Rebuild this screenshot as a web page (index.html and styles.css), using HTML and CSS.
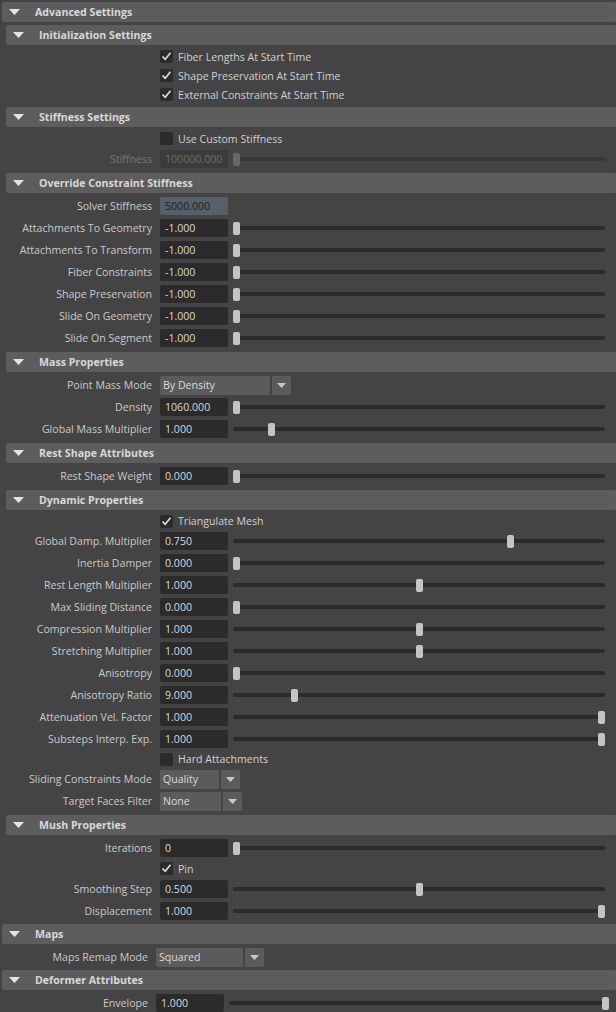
FILE: index.html
```html
<!DOCTYPE html>
<html>
<head>
<meta charset="utf-8">
<link rel="stylesheet" href="styles.css">
</head>
<body>
<div class="editor">

  <section class="frame top">
    <div class="hdr"><svg class="tri" viewBox="0 0 11 6"><polygon points="0,0 11,0 5.5,6"/></svg><span>Advanced Settings</span></div>
    <div class="nest">

      <section class="frame sub">
        <div class="hdr"><svg class="tri" viewBox="0 0 11 6"><polygon points="0,0 11,0 5.5,6"/></svg><span>Initialization Settings</span></div>
        <div class="body">
          <div class="row chk"><span class="lbl"></span><span class="cb on"><svg viewBox="0 0 13 13"><polyline points="2.5,6.5 5.2,9.3 10.5,2.8"/></svg></span><span class="cbt">Fiber Lengths At Start Time</span></div>
          <div class="row chk"><span class="lbl"></span><span class="cb on"><svg viewBox="0 0 13 13"><polyline points="2.5,6.5 5.2,9.3 10.5,2.8"/></svg></span><span class="cbt">Shape Preservation At Start Time</span></div>
          <div class="row chk"><span class="lbl"></span><span class="cb on"><svg viewBox="0 0 13 13"><polyline points="2.5,6.5 5.2,9.3 10.5,2.8"/></svg></span><span class="cbt">External Constraints At Start Time</span></div>
        </div>
      </section>

      <section class="frame sub">
        <div class="hdr"><svg class="tri" viewBox="0 0 11 6"><polygon points="0,0 11,0 5.5,6"/></svg><span>Stiffness Settings</span></div>
        <div class="body">
          <div class="row chk"><span class="lbl"></span><span class="cb"></span><span class="cbt">Use Custom Stiffness</span></div>
          <div class="row disabled"><span class="lbl">Stiffness</span><span class="field">100000.000</span><span class="slider" style="--v:0"><span class="thumb"></span></span></div>
        </div>
      </section>

      <section class="frame sub">
        <div class="hdr"><svg class="tri" viewBox="0 0 11 6"><polygon points="0,0 11,0 5.5,6"/></svg><span>Override Constraint Stiffness</span></div>
        <div class="body">
          <div class="row"><span class="lbl">Solver Stiffness</span><span class="field sel">5000.000</span></div>
          <div class="row"><span class="lbl">Attachments To Geometry</span><span class="field">-1.000</span><span class="slider" style="--v:0"><span class="thumb"></span></span></div>
          <div class="row"><span class="lbl">Attachments To Transform</span><span class="field">-1.000</span><span class="slider" style="--v:0"><span class="thumb"></span></span></div>
          <div class="row"><span class="lbl">Fiber Constraints</span><span class="field">-1.000</span><span class="slider" style="--v:0"><span class="thumb"></span></span></div>
          <div class="row"><span class="lbl">Shape Preservation</span><span class="field">-1.000</span><span class="slider" style="--v:0"><span class="thumb"></span></span></div>
          <div class="row"><span class="lbl">Slide On Geometry</span><span class="field">-1.000</span><span class="slider" style="--v:0"><span class="thumb"></span></span></div>
          <div class="row"><span class="lbl">Slide On Segment</span><span class="field">-1.000</span><span class="slider" style="--v:0"><span class="thumb"></span></span></div>
        </div>
      </section>

      <section class="frame sub">
        <div class="hdr"><svg class="tri" viewBox="0 0 11 6"><polygon points="0,0 11,0 5.5,6"/></svg><span>Mass Properties</span></div>
        <div class="body">
          <div class="row"><span class="lbl">Point Mass Mode</span><span class="dd w110"><span class="ddv">By Density</span></span><span class="ddb"><svg viewBox="0 0 9 5"><polygon points="0,0 9,0 4.5,5"/></svg></span></div>
          <div class="row"><span class="lbl">Density</span><span class="field">1060.000</span><span class="slider" style="--v:0"><span class="thumb"></span></span></div>
          <div class="row"><span class="lbl">Global Mass Multiplier</span><span class="field">1.000</span><span class="slider" style="--v:0.096"><span class="thumb"></span></span></div>
        </div>
      </section>

      <section class="frame sub">
        <div class="hdr"><svg class="tri" viewBox="0 0 11 6"><polygon points="0,0 11,0 5.5,6"/></svg><span>Rest Shape Attributes</span></div>
        <div class="body">
          <div class="row"><span class="lbl">Rest Shape Weight</span><span class="field">0.000</span><span class="slider" style="--v:0"><span class="thumb"></span></span></div>
        </div>
      </section>

      <section class="frame sub">
        <div class="hdr"><svg class="tri" viewBox="0 0 11 6"><polygon points="0,0 11,0 5.5,6"/></svg><span>Dynamic Properties</span></div>
        <div class="body">
          <div class="row chk tight"><span class="lbl"></span><span class="cb on"><svg viewBox="0 0 13 13"><polyline points="2.5,6.5 5.2,9.3 10.5,2.8"/></svg></span><span class="cbt">Triangulate Mesh</span></div>
          <div class="row"><span class="lbl">Global Damp. Multiplier</span><span class="field">0.750</span><span class="slider" style="--v:0.75"><span class="thumb"></span></span></div>
          <div class="row"><span class="lbl">Inertia Damper</span><span class="field">0.000</span><span class="slider" style="--v:0"><span class="thumb"></span></span></div>
          <div class="row"><span class="lbl">Rest Length Multiplier</span><span class="field">1.000</span><span class="slider" style="--v:0.5"><span class="thumb"></span></span></div>
          <div class="row"><span class="lbl">Max Sliding Distance</span><span class="field">0.000</span><span class="slider" style="--v:0"><span class="thumb"></span></span></div>
          <div class="row"><span class="lbl">Compression Multiplier</span><span class="field">1.000</span><span class="slider" style="--v:0.5"><span class="thumb"></span></span></div>
          <div class="row"><span class="lbl">Stretching Multiplier</span><span class="field">1.000</span><span class="slider" style="--v:0.5"><span class="thumb"></span></span></div>
          <div class="row"><span class="lbl">Anisotropy</span><span class="field">0.000</span><span class="slider" style="--v:0"><span class="thumb"></span></span></div>
          <div class="row"><span class="lbl">Anisotropy Ratio</span><span class="field">9.000</span><span class="slider" style="--v:0.16"><span class="thumb"></span></span></div>
          <div class="row"><span class="lbl">Attenuation Vel. Factor</span><span class="field">1.000</span><span class="slider" style="--v:1"><span class="thumb"></span></span></div>
          <div class="row"><span class="lbl">Substeps Interp. Exp.</span><span class="field">1.000</span><span class="slider" style="--v:1"><span class="thumb"></span></span></div>
          <div class="row chk tight"><span class="lbl"></span><span class="cb"></span><span class="cbt">Hard Attachments</span></div>
          <div class="row"><span class="lbl">Sliding Constraints Mode</span><span class="dd w59"><span class="ddv">Quality</span></span><span class="ddb"><svg viewBox="0 0 9 5"><polygon points="0,0 9,0 4.5,5"/></svg></span></div>
          <div class="row"><span class="lbl">Target Faces Filter</span><span class="dd w61"><span class="ddv">None</span></span><span class="ddb"><svg viewBox="0 0 9 5"><polygon points="0,0 9,0 4.5,5"/></svg></span></div>
        </div>
      </section>

      <section class="frame sub">
        <div class="hdr"><svg class="tri" viewBox="0 0 11 6"><polygon points="0,0 11,0 5.5,6"/></svg><span>Mush Properties</span></div>
        <div class="body">
          <div class="row"><span class="lbl">Iterations</span><span class="field">0</span><span class="slider" style="--v:0"><span class="thumb"></span></span></div>
          <div class="row chk"><span class="lbl"></span><span class="cb on"><svg viewBox="0 0 13 13"><polyline points="2.5,6.5 5.2,9.3 10.5,2.8"/></svg></span><span class="cbt">Pin</span></div>
          <div class="row"><span class="lbl">Smoothing Step</span><span class="field">0.500</span><span class="slider" style="--v:0.5"><span class="thumb"></span></span></div>
          <div class="row"><span class="lbl">Displacement</span><span class="field">1.000</span><span class="slider" style="--v:1"><span class="thumb"></span></span></div>
        </div>
      </section>

    </div>
  </section>

  <section class="frame top">
    <div class="hdr"><svg class="tri" viewBox="0 0 11 6"><polygon points="0,0 11,0 5.5,6"/></svg><span>Maps</span></div>
    <div class="body">
      <div class="row"><span class="lbl">Maps Remap Mode</span><span class="dd w87"><span class="ddv">Squared</span></span><span class="ddb"><svg viewBox="0 0 9 5"><polygon points="0,0 9,0 4.5,5"/></svg></span></div>
    </div>
  </section>

  <section class="frame top">
    <div class="hdr"><svg class="tri" viewBox="0 0 11 6"><polygon points="0,0 11,0 5.5,6"/></svg><span>Deformer Attributes</span></div>
    <div class="body">
      <div class="row"><span class="lbl">Envelope</span><span class="field">1.000</span><span class="slider" style="--v:1"><span class="thumb"></span></span></div>
    </div>
  </section>

</div>
</body>
</html>
```

FILE: styles.css
```css
* { box-sizing: border-box; }
html, body { margin: 0; padding: 0; }
body {
  background: #444444;
  width: 616px;
  height: 1012px;
  overflow: hidden;
  font-family: "Open Sans", "Noto Sans", sans-serif;
  font-size: 10.6px;
  color: #cacaca;
}
.editor {
  padding-top: 2px;
  display: flex;
  flex-direction: column;
  gap: 2px;
}
.frame.top { margin-left: 2px; }
.hdr {
  height: 20px;
  background: #5d5d5d;
  border-radius: 2px;
  display: flex;
  align-items: center;
  font-weight: bold;
  color: #d8d8d8;
  white-space: nowrap;
}
.tri {
  width: 11px;
  height: 6px;
  margin-left: 7px;
  margin-right: 15px;
  flex: none;
  fill: #e4e4e4;
}
.nest {
  padding-top: 3px;
  padding-left: 4px;
  display: flex;
  flex-direction: column;
  gap: 3px;
}
.body { padding-top: 2px; }
.row {
  display: flex;
  align-items: center;
  height: 22px;
  white-space: nowrap;
}
.row.chk { height: 19px; }
.row.chk.tight { height: 18px; }
.lbl {
  flex: none;
  width: 154px;
  padding-right: 8px;
  text-align: right;
}
.field {
  flex: none;
  width: 68px;
  height: 18px;
  line-height: 18px;
  padding-left: 5px;
  background: #2b2b2b;
  border-radius: 2px;
  color: #dadada;
}
.field.sel {
  background: #56606b;
  color: #1c1c1c;
}
.slider {
  flex: 1;
  position: relative;
  height: 13px;
  margin-left: 5px;
  margin-right: 11px;
}
.top > .body .slider { margin-right: 7px; }
.slider::before {
  content: "";
  position: absolute;
  left: 0;
  right: 0;
  top: 4px;
  height: 4px;
  border-radius: 2px;
  background: #2b2b2b;
}
.thumb {
  position: absolute;
  top: 0;
  left: calc(var(--v) * (100% - 7px));
  width: 7px;
  height: 13px;
  border-radius: 2px;
  background: #c4c4c4;
}
.disabled .lbl { color: #767676; }
.disabled .field { background: #3b3b3b; color: #6c6c6c; }
.disabled .slider::before { background: #383838; }
.disabled .thumb { background: #676767; }
.cb {
  flex: none;
  width: 13px;
  height: 13px;
  background: #2b2b2b;
  border-radius: 2px;
  display: flex;
}
.cb svg {
  width: 13px;
  height: 13px;
  fill: none;
  stroke: #e0e0e0;
  stroke-width: 1.6;
}
.cbt {
  margin-left: 5px;
  color: #d0d0d0;
}
.dd {
  flex: none;
  height: 19px;
  line-height: 19px;
  background: #5b5b5b;
  border-radius: 2px 0 0 2px;
  padding-left: 3px;
  color: #dadada;
}
.w110 { width: 110px; }
.w59 { width: 59px; }
.w61 { width: 61px; }
.w87 { width: 87px; }
.ddb {
  flex: none;
  width: 19px;
  height: 19px;
  margin-left: 2px;
  background: #5b5b5b;
  border-radius: 0 2px 2px 0;
  display: flex;
  align-items: center;
  justify-content: center;
}
.ddb svg {
  width: 9px;
  height: 5px;
  fill: #c8c8c8;
}
```
